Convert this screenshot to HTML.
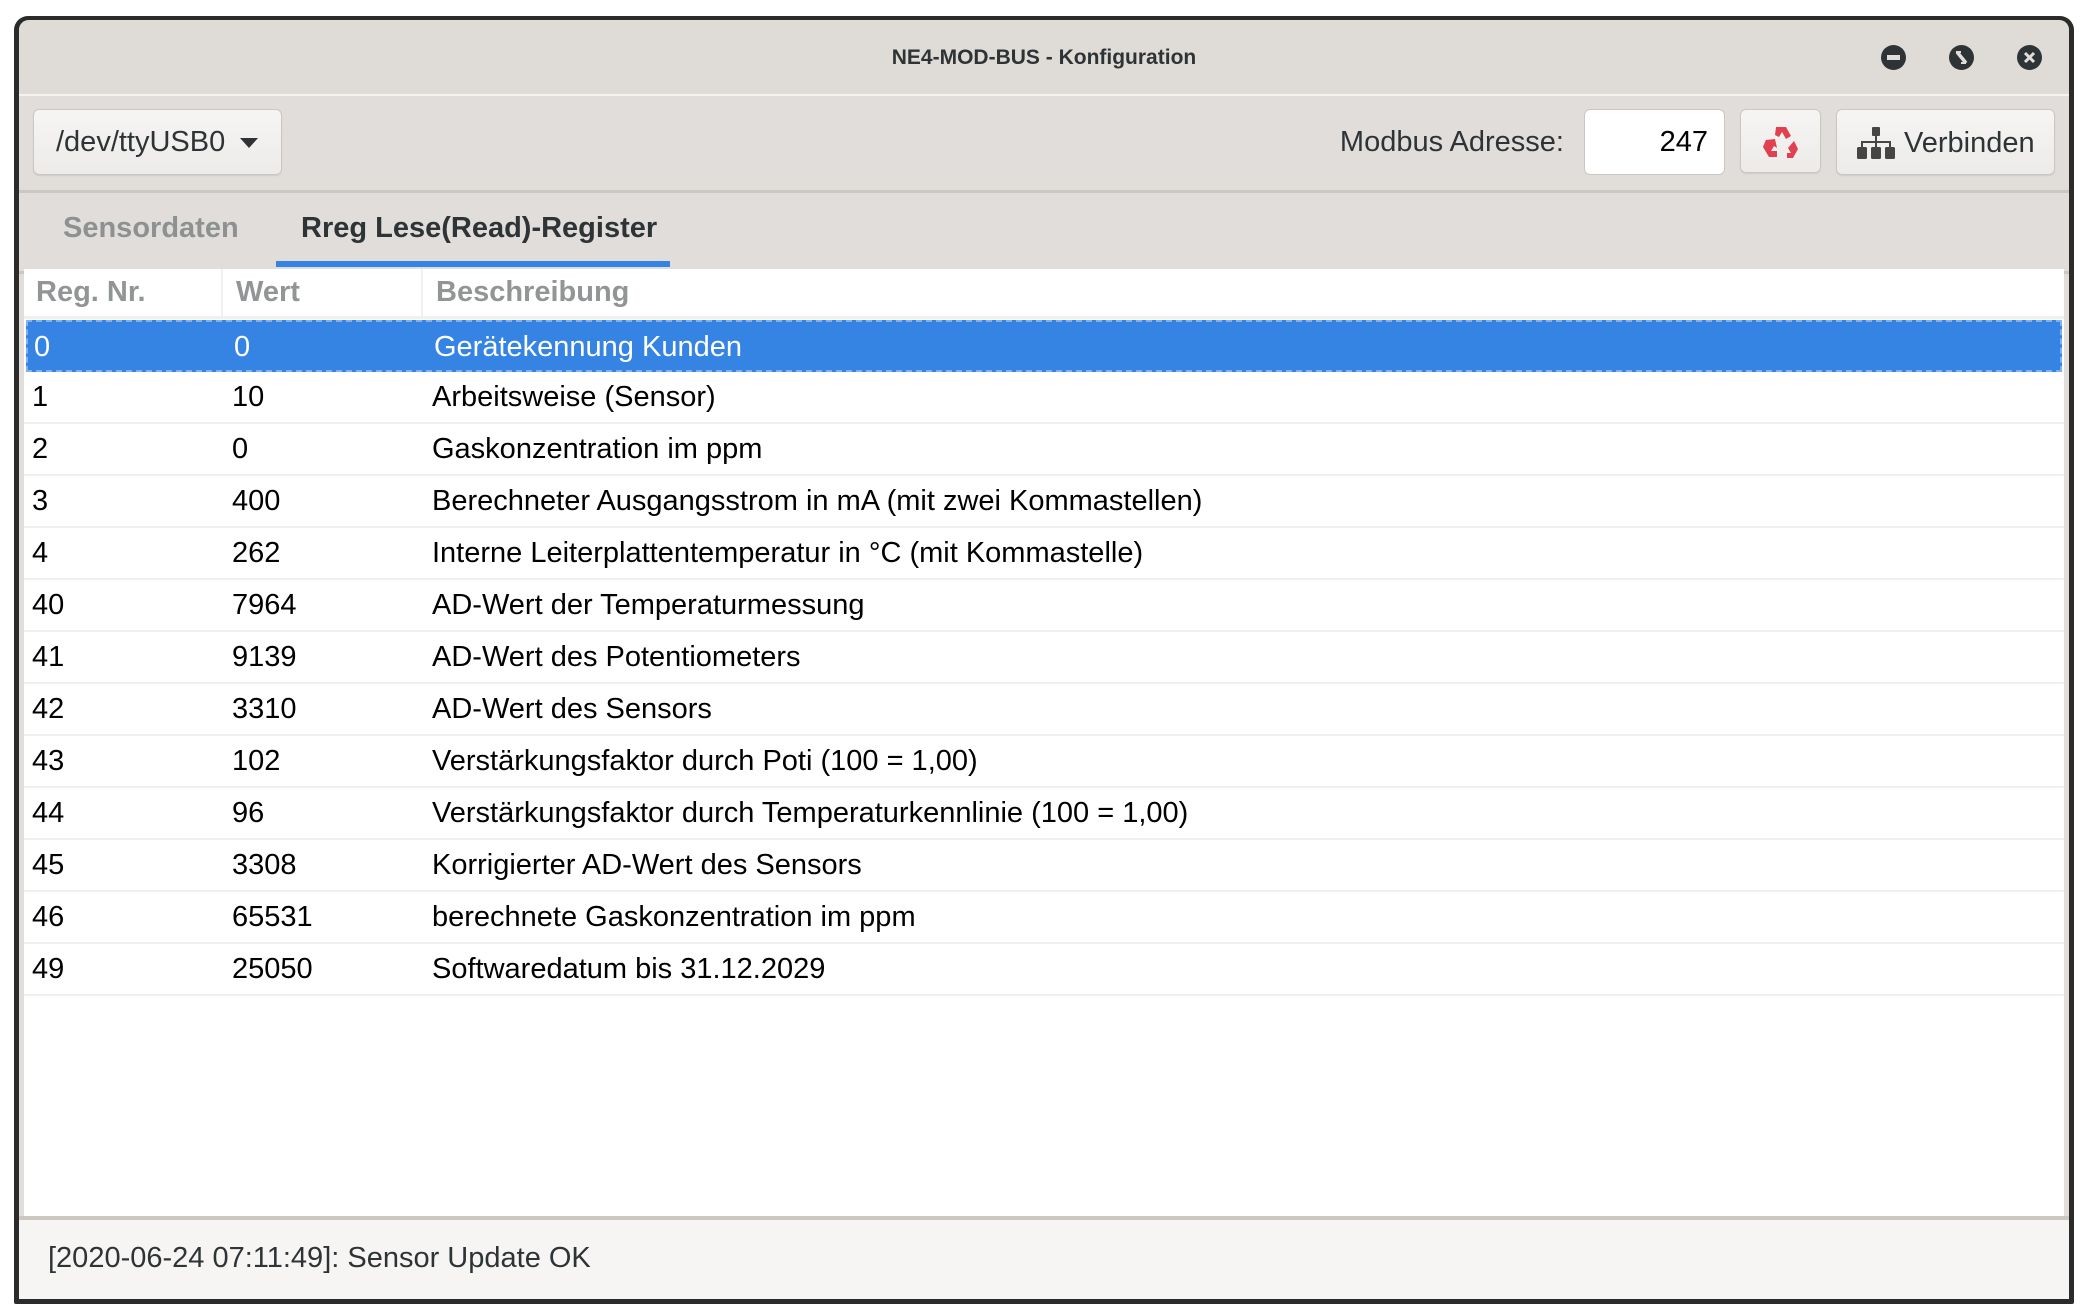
<!DOCTYPE html>
<html><head><meta charset="utf-8"><style>
*{margin:0;padding:0;box-sizing:border-box}
body{width:2088px;height:1316px;background:#fff;font-family:"Liberation Sans",sans-serif;position:relative;overflow:hidden;color:#2e3436}
.win{position:absolute;left:14px;top:16px;width:2060px;height:1288px;background:#2b2b2b;border-radius:14px 14px 2px 2px}
.inner{position:absolute;left:5px;top:4px;right:5px;bottom:5px;background:#e0dddb;border-radius:10px 10px 0 0;overflow:hidden}
.abs{position:absolute}
.title{left:0;right:0;top:0;height:76px;background:#dfdcd8;text-align:center;font-weight:bold;font-size:21px;line-height:76px;color:#2e3436;border-bottom:2px solid #f4f3f2}
.wb{width:25px;height:25px;border-radius:50%;background:#2e3436;top:25px}
.btn{background:linear-gradient(#f6f5f4,#edebe9);border:1px solid #cdc7c2;border-radius:6px;box-shadow:0 1px 1px rgba(0,0,0,.08)}
.row{position:absolute;left:0;right:0;height:52px;border-bottom:2px solid #f0f0f0;font-size:29px;line-height:50px;color:#000}
.row span{position:absolute}
</style></head><body>
<div class="win"><div class="inner">
 <div class="abs title">NE4-MOD-BUS - Konfiguration</div>
 <div class="abs wb" style="left:1862px"><div class="abs" style="left:6px;top:10px;width:13px;height:5px;background:#e0dddb"></div></div>
 <div class="abs wb" style="left:1930px"><svg class="abs" style="left:0;top:0" width="25" height="25"><path d="M8 7 L17 18" stroke="#e0dddb" stroke-width="3.5"/><path d="M7 7h5M17 18h-5" stroke="#e0dddb" stroke-width="2"/></svg></div>
 <div class="abs wb" style="left:1998px"><svg class="abs" style="left:0;top:0" width="25" height="25"><path d="M8 8 L17 17 M17 8 L8 17" stroke="#e0dddb" stroke-width="3"/></svg></div>
 <div class="abs" style="left:0;right:0;top:78px;height:95px;background:#e0dddb;border-bottom:3px solid #cdc7c2"></div>
 <div class="abs btn" style="left:14px;top:89px;width:249px;height:66px;font-size:29px;line-height:64px;padding-left:22px;color:#2e3436">/dev/ttyUSB0<svg style="position:absolute;left:206px;top:28px" width="18" height="10"><path d="M0 0h18L9 10z" fill="#2e3436"/></svg></div>
 <div class="abs" style="right:505px;top:89px;height:66px;line-height:66px;font-size:29px;color:#2e3436">Modbus Adresse:</div>
 <div class="abs" style="left:1565px;top:89px;width:141px;height:66px;background:#fff;border:1px solid #cdc7c2;border-radius:6px;font-size:29px;line-height:64px;text-align:right;padding-right:16px;color:#000">247</div>
 <div class="abs btn" style="left:1721px;top:89px;width:81px;height:64px"><svg class="abs" style="left:22px;top:14px" width="36" height="36" viewBox="0 0 36 36"><g fill="#e0404f"><path d="M13 3h10l5 9-5 3-4-7-3 5-4-2z"/><path d="M31 17l4 8-5 9h-6v-5h4l-3-5z"/><path d="M2 18l-2 5 6 10h8v-6H8l3-5 3 2-2-9-9 1z"/></g></svg></div>
 <div class="abs btn" style="left:1817px;top:89px;width:219px;height:66px;font-size:29px;line-height:66px;padding-left:67px;color:#2e3436">Verbinden<svg class="abs" style="left:20px;top:17px" width="38" height="32" viewBox="0 0 38 32"><g fill="#454545"><rect x="15" y="0" width="8" height="9" rx="1"/><rect x="18" y="9" width="2" height="6"/><rect x="4" y="14" width="30" height="2"/><rect x="4" y="14" width="2" height="6"/><rect x="32" y="14" width="2" height="6"/><rect x="18" y="14" width="2" height="6"/><rect x="0" y="20" width="10" height="12" rx="1.5"/><rect x="14" y="20" width="10" height="12" rx="1.5"/><rect x="28" y="20" width="10" height="12" rx="1.5"/></g></svg></div>
 <div class="abs" style="left:0;right:0;top:176px;height:78px;background:#e0dddb;border-bottom:3px solid #cdc7c2"></div>
 <div class="abs" style="left:44px;top:186px;font-size:29px;font-weight:bold;color:#8e9192;line-height:44px">Sensordaten</div>
 <div class="abs" style="left:282px;top:186px;font-size:29px;font-weight:bold;color:#2e3436;line-height:44px">Rreg Lese(Read)-Register</div>
 <div class="abs" style="left:257px;top:241px;width:394px;height:6px;background:#3584e4"></div>
 <div class="abs" style="left:5px;right:5px;top:249px;height:947px;background:#fff">
  <div class="abs" style="left:0;right:0;top:0;height:50px;border-bottom:3px solid #f0f0f0;font-size:29px;font-weight:bold;color:#929595;line-height:46px">
   <span class="abs" style="left:12px">Reg. Nr.</span><span class="abs" style="left:212px">Wert</span><span class="abs" style="left:412px">Beschreibung</span>
   <div class="abs" style="left:197px;top:0;width:2px;height:50px;background:#f0f0f0"></div>
   <div class="abs" style="left:397px;top:0;width:2px;height:50px;background:#f0f0f0"></div>
  </div>
  <div class="row" style="top:51px;background:#3584e4;color:#fff;border:2px dashed #7fb2ee;left:2px;right:2px"><span style="left:6px">0</span><span style="left:206px">0</span><span style="left:406px">Gerätekennung Kunden</span></div>
  <div class="row" style="top:103px"><span style="left:8px">1</span><span style="left:208px">10</span><span style="left:408px">Arbeitsweise (Sensor)</span></div>
  <div class="row" style="top:155px"><span style="left:8px">2</span><span style="left:208px">0</span><span style="left:408px">Gaskonzentration im ppm</span></div>
  <div class="row" style="top:207px"><span style="left:8px">3</span><span style="left:208px">400</span><span style="left:408px">Berechneter Ausgangsstrom in mA (mit zwei Kommastellen)</span></div>
  <div class="row" style="top:259px"><span style="left:8px">4</span><span style="left:208px">262</span><span style="left:408px">Interne Leiterplattentemperatur in °C (mit Kommastelle)</span></div>
  <div class="row" style="top:311px"><span style="left:8px">40</span><span style="left:208px">7964</span><span style="left:408px">AD-Wert der Temperaturmessung</span></div>
  <div class="row" style="top:363px"><span style="left:8px">41</span><span style="left:208px">9139</span><span style="left:408px">AD-Wert des Potentiometers</span></div>
  <div class="row" style="top:415px"><span style="left:8px">42</span><span style="left:208px">3310</span><span style="left:408px">AD-Wert des Sensors</span></div>
  <div class="row" style="top:467px"><span style="left:8px">43</span><span style="left:208px">102</span><span style="left:408px">Verstärkungsfaktor durch Poti (100 = 1,00)</span></div>
  <div class="row" style="top:519px"><span style="left:8px">44</span><span style="left:208px">96</span><span style="left:408px">Verstärkungsfaktor durch Temperaturkennlinie (100 = 1,00)</span></div>
  <div class="row" style="top:571px"><span style="left:8px">45</span><span style="left:208px">3308</span><span style="left:408px">Korrigierter AD-Wert des Sensors</span></div>
  <div class="row" style="top:623px"><span style="left:8px">46</span><span style="left:208px">65531</span><span style="left:408px">berechnete Gaskonzentration im ppm</span></div>
  <div class="row" style="top:675px"><span style="left:8px">49</span><span style="left:208px">25050</span><span style="left:408px">Softwaredatum bis 31.12.2029</span></div>
 </div>
 <div class="abs" style="left:0;right:0;top:1196px;height:4px;background:#cdc7c2"></div>
 <div class="abs" style="left:0;right:0;top:1200px;bottom:0;background:#f6f5f4;font-size:29px;line-height:76px;padding-left:29px;color:#2e3436">[2020-06-24 07:11:49]: Sensor Update OK</div>
</div></div>
</body></html>
